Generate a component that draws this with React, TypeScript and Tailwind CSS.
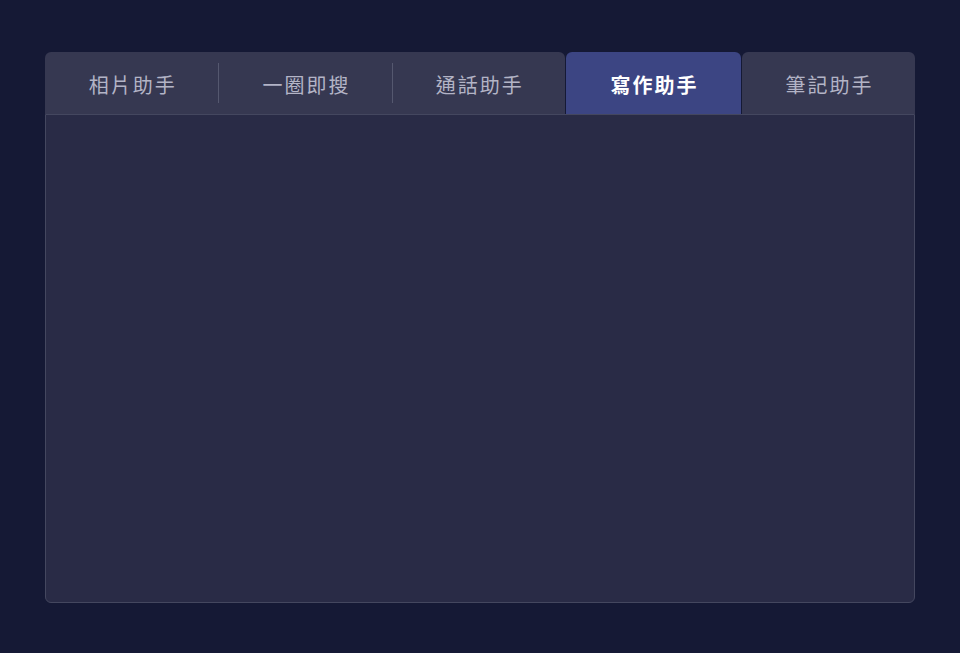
const tabs = ["相片助手", "一圈即搜", "通話助手"];

export default function App() {
  return (
    <div
      className="min-h-screen w-full bg-[#151935] px-[45px] pt-[52px]"
      style={{ fontFamily: '"Noto Sans CJK TC", "Noto Sans", sans-serif' }}
    >
      <div className="w-[870px]">
        {/* Tab bar */}
        <div className="flex h-[62px] gap-px">
          <div className="flex w-[520px] items-center rounded-t-md bg-[#363851]">
            {tabs.map((t, i) => (
              <div key={t} className="flex flex-1 items-center">
                {i > 0 && <span className="h-[40px] w-px bg-[#55586f]" />}
                <span className="flex-1 pt-[3px] pl-[2px] text-center text-[20px] tracking-[0.1em] text-[#b3b4c6]">
                  {t}
                </span>
              </div>
            ))}
          </div>
          <div className="flex w-[175px] items-center justify-center rounded-t-md bg-[#3c4583] pt-[3px] pl-[2px] text-[20px] font-bold tracking-[0.1em] text-white">
            寫作助手
          </div>
          <div className="flex flex-1 items-center justify-center rounded-t-md bg-[#363851] pt-[3px] pl-[2px] text-[20px] tracking-[0.1em] text-[#b3b4c6]">
            筆記助手
          </div>
        </div>

        {/* Content */}
        <div className="h-[489px] rounded-b-md border border-[#44475f] bg-[#292b46]" />
      </div>
    </div>
  );
}
